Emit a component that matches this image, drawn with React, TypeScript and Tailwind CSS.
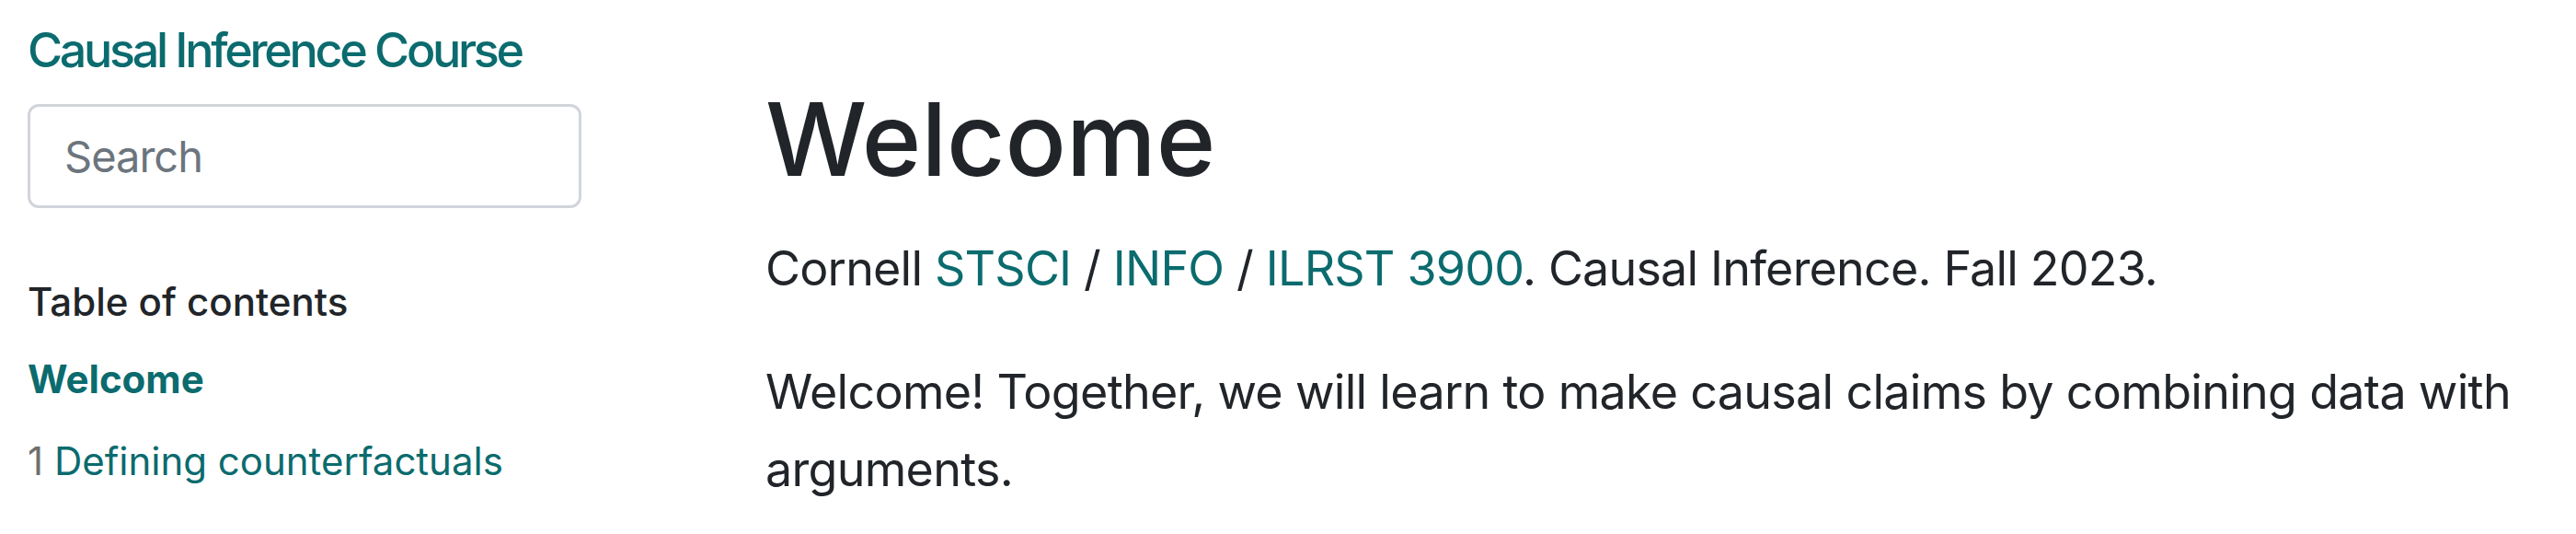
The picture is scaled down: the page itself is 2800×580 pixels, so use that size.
import React from "react";

const teal = "text-[#0b6b6e]";

function Sidebar() {
  return (
    <aside className="w-[832px] shrink-0 pl-[30px] pt-[23px]">
      <div className={`text-[52px] leading-[64px] font-medium tracking-[-3.3px] ${teal}`}>Causal Inference Course</div>
      <div className="mt-[26px] w-[602px]">
        <input
          type="text"
          placeholder="Search"
          className="w-full h-[113px] rounded-[12px] border-[3px] border-[#d1d5db] bg-white pl-[37px] text-[47px] tracking-[-1px] text-[#212529] placeholder:text-[#6c757d] outline-none"
        />
      </div>
      <div className="mt-[74px] text-[42px] leading-[56px] font-medium text-[#212529]">Table of contents</div>
      <ul>
        <li className={`mt-[28px] text-[42px] leading-[56px] font-bold ${teal}`}>Welcome</li>
        <li className="mt-[33px] text-[42px] leading-[56px]">
          <span className="text-[#6f6f6f]">1</span> <span className={teal}>Defining counterfactuals</span>
        </li>
      </ul>
    </aside>
  );
}

export default function App() {
  return (
    <div
      className="flex w-[2800px] h-[580px] overflow-hidden bg-white text-[#212529]"
      style={{ fontFamily: "Inter, 'Noto Sans', sans-serif" }}
    >
      <Sidebar />
      <main className="w-[1960px] pt-[81px]">
        <h1 className="text-[110px] leading-[140px] font-medium">Welcome</h1>
        <p className="mt-[29px] text-[52px] leading-[84px] tracking-[-0.8px]">
          Cornell <a className={teal}>STSCI</a> / <a className={teal}>INFO</a> /{" "}
          <a className={teal}>ILRST 3900</a>. Causal Inference. Fall 2023.
        </p>
        <p className="mt-[50px] text-[52px] leading-[84px] tracking-[-0.7px]">
          Welcome! Together, we will learn to make causal claims by combining data with arguments.
        </p>
      </main>
    </div>
  );
}
